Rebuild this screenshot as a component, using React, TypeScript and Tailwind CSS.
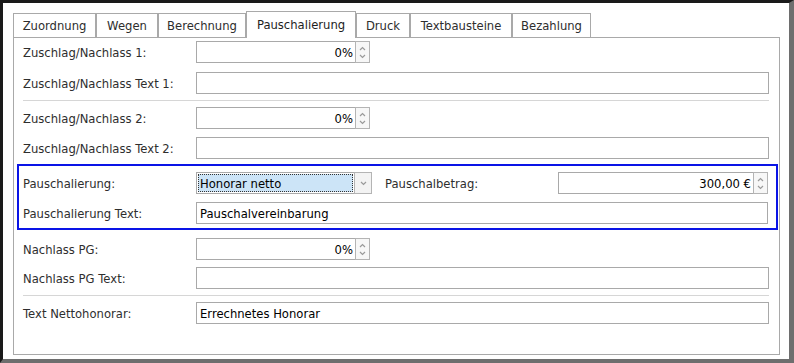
import React from "react";

const tabs = [
  { label: "Zuordnung", w: "w-[83px]" },
  { label: "Wegen", w: "w-[62px]" },
  { label: "Berechnung", w: "w-[88px]" },
  { label: "Pauschalierung", w: "w-[110px]", active: true },
  { label: "Druck", w: "w-[54px]" },
  { label: "Textbausteine", w: "w-[102px]" },
  { label: "Bezahlung", w: "w-[79px]" },
];

function Chevron({ up }: { up?: boolean }) {
  return (
    <svg width="7" height="5" viewBox="0 0 7 5" className="block">
      <path
        d={up ? "M1 4 L3.5 1.5 L6 4" : "M1 1 L3.5 3.5 L6 1"}
        fill="none"
        stroke="#9a9a9a"
        strokeWidth="1.2"
      />
    </svg>
  );
}

function Spinner() {
  return (
    <div className="w-[15px] h-[22px] border border-[#b4b4b4] bg-[#f7f7f7] flex flex-col items-center justify-center gap-[3px]">
      <Chevron up />
      <Chevron />
    </div>
  );
}

function TextField({ value = "" }: { value?: string }) {
  return (
    <div className="flex-1 h-[22px] border border-[#a9a9a9] bg-white px-[3px] pt-[3px] flex items-center text-black">
      {value}
    </div>
  );
}

function NumberField({ value, w }: { value: string; w: string }) {
  return (
    <div className="flex">
      <div
        className={`${w} h-[22px] border border-[#a9a9a9] border-r-0 bg-white px-[2px] pt-[3px] flex items-center justify-end text-black`}
      >
        {value}
      </div>
      <Spinner />
    </div>
  );
}

function Row({
  label,
  children,
  className = "",
}: {
  label: string;
  children: React.ReactNode;
  className?: string;
}) {
  return (
    <div className={`flex items-center pl-[9px] pr-[10px] ${className}`}>
      <div className="w-[173px] pt-[3px] text-[#2e2e2e]">{label}</div>
      {children}
    </div>
  );
}

export default function App() {
  return (
    <div
      className="w-[794px] h-[363px] bg-white border-t-[3px] border-l-[3px] border-r-[5px] border-b-[4px] border-t-[#1a1a1a] border-l-[#1a1a1a] border-r-[#6e6e6e] border-b-[#6e6e6e] pl-[10px] pt-[8px] text-[11.6px] leading-none overflow-hidden"
      style={{ fontFamily: "'DejaVu Sans', Verdana, sans-serif" }}
    >
      {/* Tabs */}
      <div className="flex items-end h-[26px]">
        {tabs.map((t) =>
          t.active ? (
            <div
              key={t.label}
              className={`${t.w} h-[27px] -mb-px relative z-10 bg-white border border-b-0 border-[#a9a9a9] pt-[2px] flex items-center justify-center text-[#1e1e1e]`}
            >
              {t.label}
            </div>
          ) : (
            <div
              key={t.label}
              className={`${t.w} h-[24px] bg-white border border-b-0 border-[#a9a9a9] pt-[3px] flex items-center justify-center text-[#2e2e2e]`}
            >
              {t.label}
            </div>
          )
        )}
      </div>

      {/* Panel */}
      <div className="w-[767px] h-[318px] border border-[#a9a9a9] bg-white pt-[3px]">
        <Row label="Zuschlag/Nachlass 1:">
          <NumberField value="0%" w="w-[159px]" />
        </Row>
        <Row label="Zuschlag/Nachlass Text 1:" className="mt-[9px]">
          <TextField />
        </Row>
        <div className="mx-[9px] mr-[10px] mt-[6px] h-px bg-[#d6d6d6]" />
        <Row label="Zuschlag/Nachlass 2:" className="mt-[6px]">
          <NumberField value="0%" w="w-[159px]" />
        </Row>
        <Row label="Zuschlag/Nachlass Text 2:" className="mt-[8px]">
          <TextField />
        </Row>

        {/* Highlighted group */}
        <div className="ml-[3px] mr-px mt-[5px] h-[66px] border-2 border-[#0a14e6] pt-[6px]">
          <div className="flex items-center pl-[4px] pr-[8px]">
            <div className="w-[173px] pt-[3px] text-[#2e2e2e]">Pauschalierung:</div>
            <div className="flex">
              <div className="w-[158px] h-[22px] border border-[#a9a9a9] border-r-0 bg-white p-px">
                <div className="h-full bg-[#cce4f7] border border-dotted border-[#333] flex items-center px-[1px] pt-[3px] text-black">
                  Honorar netto
                </div>
              </div>
              <div className="w-[18px] h-[22px] border border-[#b4b4b4] bg-[#f3f3f3] flex items-center justify-center">
                <Chevron />
              </div>
            </div>
            <div className="ml-[13px] w-[173px] pt-[3px] text-[#2e2e2e]">Pauschalbetrag:</div>
            <div className="flex-1 flex">
              <div className="flex-1 h-[22px] border border-[#a9a9a9] border-r-0 bg-white px-[2px] pt-[3px] flex items-center justify-end text-black">
                300,00 €
              </div>
              <Spinner />
            </div>
          </div>
          <div className="flex items-center pl-[4px] pr-[8px] mt-[8px]">
            <div className="w-[173px] pt-[3px] text-[#2e2e2e]">Pauschalierung Text:</div>
            <TextField value="Pauschalvereinbarung" />
          </div>
        </div>

        <Row label="Nachlass PG:" className="mt-[8px]">
          <NumberField value="0%" w="w-[159px]" />
        </Row>
        <Row label="Nachlass PG Text:" className="mt-[7px]">
          <TextField />
        </Row>
        <div className="mx-[9px] mr-[10px] mt-[6px] h-px bg-[#d6d6d6]" />
        <Row label="Text Nettohonorar:" className="mt-[6px]">
          <TextField value="Errechnetes Honorar" />
        </Row>
      </div>
    </div>
  );
}
